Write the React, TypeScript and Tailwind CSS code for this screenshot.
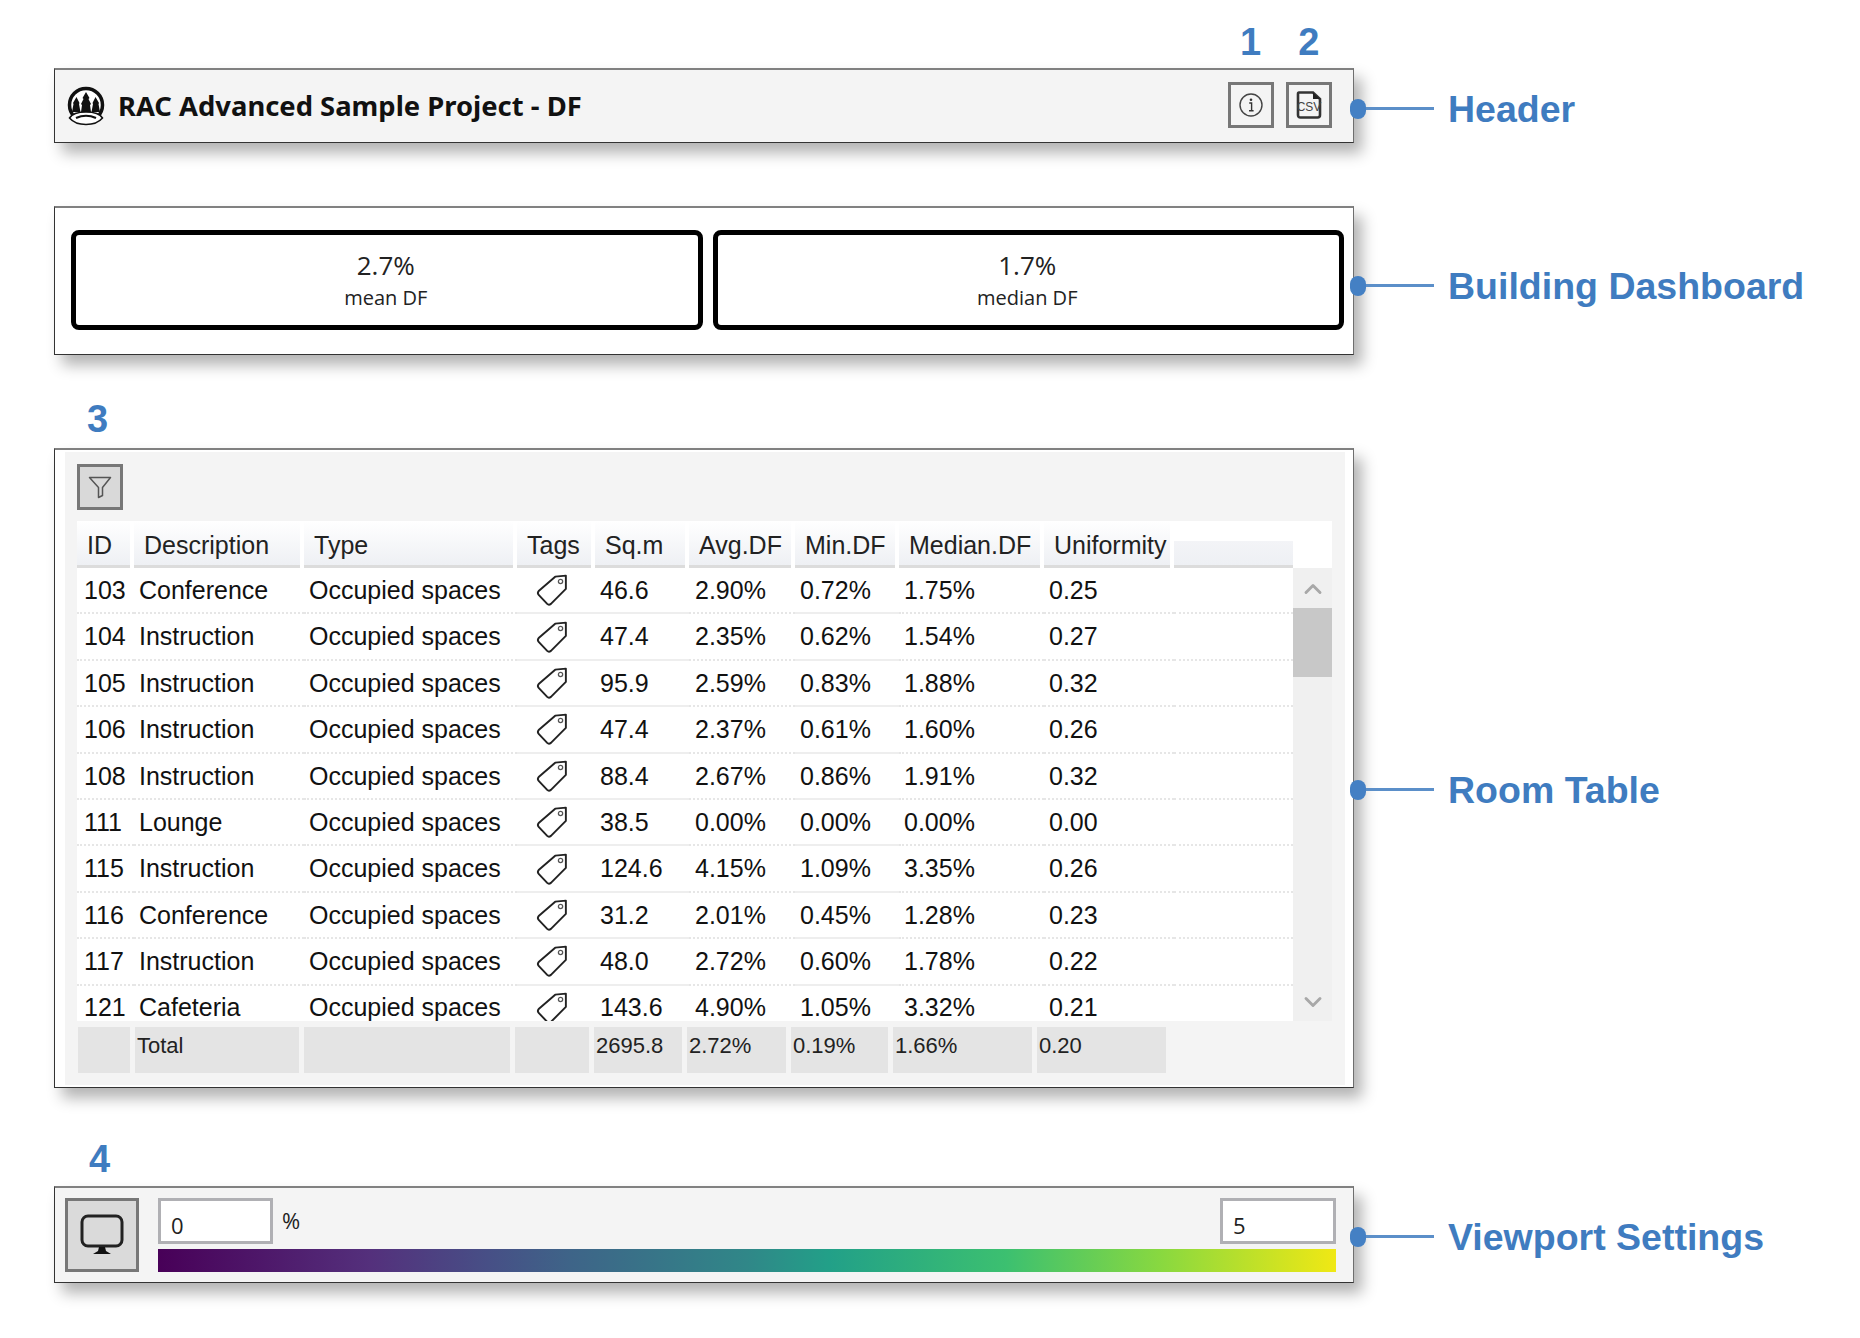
import React from "react";
import { ChevronDown, ChevronUp } from "lucide-react";

const rooms = [
  ["103", "Conference", "46.6", "2.90%", "0.72%", "1.75%", "0.25"],
  ["104", "Instruction", "47.4", "2.35%", "0.62%", "1.54%", "0.27"],
  ["105", "Instruction", "95.9", "2.59%", "0.83%", "1.88%", "0.32"],
  ["106", "Instruction", "47.4", "2.37%", "0.61%", "1.60%", "0.26"],
  ["108", "Instruction", "88.4", "2.67%", "0.86%", "1.91%", "0.32"],
  ["111", "Lounge", "38.5", "0.00%", "0.00%", "0.00%", "0.00"],
  ["115", "Instruction", "124.6", "4.15%", "1.09%", "3.35%", "0.26"],
  ["116", "Conference", "31.2", "2.01%", "0.45%", "1.28%", "0.23"],
  ["117", "Instruction", "48.0", "2.72%", "0.60%", "1.78%", "0.22"],
  ["121", "Cafeteria", "143.6", "4.90%", "1.05%", "3.32%", "0.21"],
];

const headers = ["ID", "Description", "Type", "Tags", "Sq.m", "Avg.DF", "Min.DF", "Median.DF", "Uniformity"];
const totals = ["", "Total", "", "", "2695.8", "2.72%", "0.19%", "1.66%", "0.20"];

const columns = "grid grid-cols-[57px_170px_213px_78px_94px_106px_104px_145px_130px_1fr]";
const dotted = "border-b-2 border-dotted border-[#e6e6e6]";
const solid = "border-b-2 border-solid border-[#eeeeee]";

const CrownLogo = () => (
  <svg width="38" height="40" viewBox="0 0 38 40" className="shrink-0">
    <circle cx="19" cy="19" r="16.5" fill="#fff" stroke="#111" strokeWidth="3.5" />
    <path d="M19 6 L22.5 12 L21.5 13 L24 18 L23 19 L24 26 L14 26 L15 19 L14 18 L16.5 13 L15.5 12 Z" fill="#111" />
    <path d="M9.5 11 L12.5 17 L12 18 L13.5 26 L5 26 L6.5 18 L6 17 Z" fill="#111" />
    <path d="M28.5 11 L32 17 L31.5 18 L33 26 L24.5 26 L26 18 L25.5 17 Z" fill="#111" />
    <path d="M2.5 32 Q6 26 19 26 Q32 26 35.5 32 Q30 38.5 19 38.5 Q8 38.5 2.5 32 Z" fill="#fff" stroke="#111" strokeWidth="1.5" />
    <path d="M9 32 Q19 27.5 29 32" fill="none" stroke="#111" strokeWidth="2.2" />
  </svg>
);

const InfoIcon = () => (
  <svg width="26" height="26" viewBox="0 0 26 26">
    <circle cx="13" cy="13" r="11" fill="none" stroke="#444" strokeWidth="1.4" />
    <circle cx="13" cy="7.8" r="1.3" fill="#333" />
    <path d="M11.2 11 H13.6 V18.6 M11 18.8 H15.6" fill="none" stroke="#333" strokeWidth="1.4" />
  </svg>
);

const CsvIcon = () => (
  <svg width="26" height="28" viewBox="0 0 26 28">
    <path d="M3 1.5 H17 L24 8 V24 Q24 26.5 21.5 26.5 H4.5 Q2 26.5 2 24 V3 Q2 1.5 3 1.5 Z" fill="#f4f4f4" stroke="#333" strokeWidth="2.6" />
    <path d="M17 1.5 L24 8 H17 Z" fill="#222" />
    <text x="13" y="20" textAnchor="middle" fontSize="12" fontFamily="'Liberation Sans', sans-serif" fill="#444">
      CSV
    </text>
  </svg>
);

const FilterIcon = () => (
  <svg width="24" height="24" viewBox="0 0 24 24">
    <path d="M1.5 2.5 H22.5 L14.5 12.5 V20.5 L10.5 22.5 V12.5 Z" fill="none" stroke="#555" strokeWidth="1.5" strokeLinejoin="round" />
  </svg>
);

const MonitorIcon = () => (
  <svg width="44" height="42" viewBox="0 0 44 42">
    <rect x="2" y="2" width="40" height="30" rx="6" fill="none" stroke="#222" strokeWidth="3" />
    <path d="M19 33 H25 L26 37 L31 40 H13 L18 37 Z" fill="#111" />
  </svg>
);

const TagIcon = () => (
  <svg width="32" height="32" viewBox="0 0 30 30">
    <path
      d="M28 1.5 L18 2.5 L2.5 16 Q1 18 2.5 19.5 L10.5 28 Q12 29.5 14 28 L28 14 Z"
      fill="#fff"
      stroke="#222"
      strokeWidth="1.8"
      strokeLinejoin="round"
    />
    <circle cx="23" cy="7" r="2" fill="none" stroke="#555" strokeWidth="1.2" />
  </svg>
);

const IconButton = ({ className, children }: { className: string; children: React.ReactNode }) => (
  <div className={`flex shrink-0 items-center justify-center border-[3px] border-[#777] ${className}`}>{children}</div>
);

const Callout = ({ label, className }: { label: string; className: string }) => (
  <div className={`flex items-center ${className}`}>
    <div className="-ml-[4px] h-[20px] w-[16px] rounded-full bg-[#4480c4]" />
    <div className="h-[3px] w-[68px] bg-[#5b8fc9]" />
    <span className="mt-[2px] ml-[14px] whitespace-nowrap text-[37.5px] leading-none font-bold text-[#3f7cc0]">{label}</span>
  </div>
);

const StepNumber = ({ value, className }: { value: string; className: string }) => (
  <span className={`block text-[38px] leading-none font-bold text-[#3f7cc0] ${className}`}>{value}</span>
);

const panelBorder =
  "w-[1300px] shrink-0 border border-t-2 border-t-[#808080] border-r-[#6e6e6e] border-b-[#333] border-l-[#333] shadow-[8px_10px_14px_rgba(0,0,0,0.3)]";

const StatCard = ({ value, label }: { value: string; label: string }) => (
  <div className="flex h-[100px] flex-1 flex-col items-center justify-center rounded-[8px] border-[5px] border-black bg-white font-['Open_Sans',sans-serif] text-[#222]">
    <span className="-ml-[2px] text-[26px] leading-[34px]">{value}</span>
    <span className="-ml-[2px] text-[20px] leading-[31px]">{label}</span>
  </div>
);

const RoomTable = () => (
  <div className="mt-[11px] ml-[12px] w-[1255px]">
    <div className={`${columns} h-[47px] bg-white text-[25px] text-[#222]`}>
      {headers.map((h) => (
        <div key={h} className="mr-[4px] flex items-center border-b-[3px] border-[#dcdcdc] bg-gradient-to-b from-white to-[#eef0f4] pt-[6px] pl-[10px] whitespace-nowrap">
          {h}
        </div>
      ))}
      <div className="mt-[20px] mr-[39px] border-b-[3px] border-[#dcdcdc] bg-gradient-to-b from-[#f3f4f7] to-[#eef0f4]" />
    </div>
    <div className="flex h-[453px]">
      <div className="w-[1216px] overflow-hidden bg-white text-[25px] text-[#111]">
        {rooms.map((r) => (
          <div key={r[0]} className={`${columns} h-[46.4px]`}>
            <div className={`${dotted} flex items-center pt-[1px] pl-[7px]`}>{r[0]}</div>
            <div className={`${dotted} flex items-center pt-[1px] pl-[5px]`}>{r[1]}</div>
            <div className={`${dotted} flex items-center pt-[1px] pl-[5px]`}>Occupied spaces</div>
            <div className={`${solid} flex items-center justify-center pr-[8px]`}>
              <TagIcon />
            </div>
            <div className={`${solid} flex items-center pt-[1px] pl-[5px]`}>{r[2]}</div>
            <div className={`${dotted} flex items-center pt-[1px] pl-[6px]`}>{r[3]}</div>
            <div className={`${solid} flex items-center pt-[1px] pl-[5px]`}>{r[4]}</div>
            <div className={`${dotted} flex items-center pt-[1px] pl-[5px]`}>{r[5]}</div>
            <div className={`${dotted} flex items-center pt-[1px] pl-[5px]`}>{r[6]}</div>
            <div className={dotted} />
          </div>
        ))}
      </div>
      <div className="flex w-[39px] flex-col items-center bg-[#f0f0f0]">
        <ChevronUp size={28} strokeWidth={2.5} className="mt-[7px] text-[#a8a8a8]" />
        <div className="mt-[5px] h-[69px] w-full bg-[#c8c8c8]" />
        <ChevronDown size={28} strokeWidth={2.5} className="mt-auto mb-[5px] text-[#a8a8a8]" />
      </div>
    </div>
    <div className="mt-[6px] ml-[1px] grid grid-cols-[52px_164px_206px_74px_88px_99px_97px_139px_129px] gap-x-[5px] text-[22px] text-[#222]">
      {totals.map((t, i) => (
        <div key={i} className="h-[46px] bg-[#e4e4e4] pt-[4px] pl-[2px] leading-[30px]">
          {t}
        </div>
      ))}
    </div>
  </div>
);

export default function App() {
  return (
    <div className="min-h-[1338px] bg-white pl-[54px] font-['Liberation_Sans',Arial,sans-serif]">
      <div className="flex h-[68px] items-center pt-[16px]">
        <StepNumber value="1" className="ml-[1186px]" />
        <StepNumber value="2" className="ml-[37px]" />
      </div>
      <div className="flex items-start">
        <div className={`${panelBorder} flex h-[75px] items-center bg-[#f4f4f4] pr-[21px] pl-[12px]`}>
          <CrownLogo />
          <span className="ml-[13px] font-['Noto_Sans',sans-serif] text-[27.4px] font-bold text-[#111]">
            RAC Advanced Sample Project - DF
          </span>
          <IconButton className="mt-[-2px] ml-auto h-[46px] w-[46px]">
            <InfoIcon />
          </IconButton>
          <IconButton className="mt-[-2px] ml-[12px] h-[46px] w-[46px]">
            <CsvIcon />
          </IconButton>
        </div>
        <Callout label="Header" className="mt-[21px]" />
      </div>

      <div className="mt-[63px] flex items-start">
        <div className={`${panelBorder} flex h-[149px] items-center gap-[10px] bg-white pr-[9px] pb-[2px] pl-[16px]`}>
          <StatCard value="2.7%" label="mean DF" />
          <StatCard value="1.7%" label="median DF" />
        </div>
        <Callout label="Building Dashboard" className="mt-[60px]" />
      </div>

      <div className="flex h-[93px] items-center pt-[34px]">
        <StepNumber value="3" className="ml-[33px]" />
      </div>
      <div className="flex items-start">
        <div className={`${panelBorder} h-[640px] bg-white pt-[2px] pr-[8px] pb-[2px] pl-[10px]`}>
          <div className="h-full bg-[#f4f4f4] pt-[12px]">
            <IconButton className="ml-[12px] h-[46px] w-[46px] bg-[#d9d9d9]">
              <FilterIcon />
            </IconButton>
            <RoomTable />
          </div>
        </div>
        <Callout label="Room Table" className="mt-[322px]" />
      </div>

      <div className="flex h-[98px] items-center pt-[44px]">
        <StepNumber value="4" className="ml-[35px]" />
      </div>
      <div className="flex items-start">
        <div className={`${panelBorder} flex h-[97px] items-center bg-[#f4f4f4] pr-[17px] pl-[10px]`}>
          <IconButton className="h-[74px] w-[74px] bg-[#dadada]">
            <MonitorIcon />
          </IconButton>
          <div className="ml-[19px] flex flex-1 flex-col gap-[5px]">
            <div className="flex items-start font-['Open_Sans',sans-serif] text-[22px] text-[#222]">
              <div className="flex h-[46px] w-[115px] items-center border-[3px] border-[#b0b0b4] bg-white pt-[9px] pl-[10px]">0</div>
              <span className="ml-[9px] text-[22px] leading-[44px]">%</span>
              <div className="ml-auto flex h-[46px] w-[116px] items-center border-[3px] border-[#b0b0b4] bg-white pt-[9px] pl-[10px]">5</div>
            </div>
            <div className="h-[23px] bg-[linear-gradient(to_right,#480058_0%,#54307c_18%,#474f86_28%,#3e6488_35%,#308788_50%,#22a088_57%,#3cc070_72%,#88d840_85%,#f0e814_100%)]" />
          </div>
        </div>
        <Callout label="Viewport Settings" className="mt-[31px]" />
      </div>
    </div>
  );
}
